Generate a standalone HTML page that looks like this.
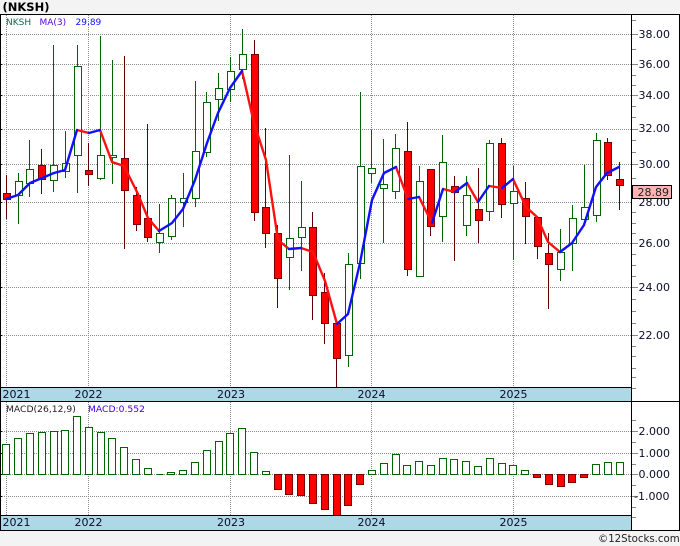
<!DOCTYPE html>
<html><head><meta charset="utf-8"><title>NKSH</title>
<style>
html,body{margin:0;padding:0;background:#f3f3f3}
svg{display:block}
text{font-family:"DejaVu Sans","Liberation Sans",sans-serif;font-size:11px;fill:#0c0c2a}
</style></head><body>
<svg width="680" height="546" viewBox="0 0 680 546" xmlns="http://www.w3.org/2000/svg">
<rect width="680" height="546" fill="#f3f3f3"/>
<rect x="0" y="14" width="680" height="517" fill="#fff"/>
<g shape-rendering="crispEdges">
<rect x="1" y="387" width="630" height="14" fill="#add8e6"/>
<rect x="1" y="515" width="630" height="15" fill="#add8e6"/>
<path fill="none" stroke="#8c8c8c" stroke-dasharray="1 1" d="M2 34.5H631M2 64.5H631M2 95.5H631M2 129.5H631M2 164.5H631M2 202.5H631M2 243.5H631M2 287.5H631M2 335.5H631M2 431.5H631M2 453.5H631M2 474.5H631M2 496.5H631M6.5 15V387M88.5 15V387M230.5 15V387M371.5 15V387M513.5 15V387M6.5 402V515M88.5 402V515M230.5 402V515M371.5 402V515M513.5 402V515"/>
<path fill="none" stroke="#888" d="M632 20.5h4M632 34.5h6M632 49.5h4M632 64.5h6M632 75.5h4M632 85.5h4M632 95.5h6M632 106.5h4M632 117.5h4M632 129.5h6M632 140.5h4M632 152.5h4M632 164.5h6M632 178.5h4M632 212.5h4M632 223.5h4M632 233.5h4M632 243.5h6M632 254.5h4M632 265.5h4M632 276.5h4M632 287.5h6M632 299.5h4M632 311.5h4M632 323.5h4M632 335.5h6M632 346.5h4M632 356.5h4M632 368.5h4M632 377.5h4M632 388.5h4M632 420.5h4M632 431.5h6M632 442.5h4M632 453.5h6M632 464.5h4M632 474.5h6M632 485.5h4M632 496.5h6M632 507.5h4M632 517.5h4"/>
<!-- green wicks -->
<path fill="none" stroke="#006400" d="M18.5 173V224M29.5 140V197M53.5 45V192M65.5 131V178M77.5 45V193M100.5 36V180M112.5 60V184M159.5 204V253M171.5 195V240M183.5 173V227M195.5 81V207M206.5 92V157M218.5 73V121M230.5 57V102M242.5 29V79M289.5 155V290M301.5 181V271M348.5 253V367M360.5 92V279M371.5 130V183M383.5 139V243M395.5 134V199M419.5 166V276M442.5 135V242M466.5 176V236M489.5 140V221M513.5 166V260M560.5 229V281M572.5 205V271M584.5 165V220M596.5 133V222"/>
<!-- red wicks -->
<path fill="none" stroke="#600000" d="M6.5 175V219M41.5 149V194M88.5 143V186M124.5 56V249M136.5 187V231M147.5 124V242M254.5 40V221M265.5 128V248M277.5 225V308M312.5 212V320M324.5 273V344M336.5 323V387M407.5 122V276M430.5 169V236M454.5 176V261M478.5 168V243M501.5 138V218M525.5 182V244M537.5 217V259M548.5 233V309M607.5 138V180M619.5 162V210"/>
<!-- green boxes -->
<path fill="#fff" stroke="#006400" d="M15.5 181.5h7V195.5h-7zM26.5 169.5h7V183.5h-7zM50.5 165.5h7V180.5h-7zM62.5 163.5h7V171.5h-7zM74.5 66.5h7V155.5h-7zM97.5 155.5h7V178.5h-7zM109.5 155.5h7V157.5h-7zM156.5 233.5h7V242.5h-7zM168.5 198.5h7V236.5h-7zM180.5 198.5h7V202.5h-7zM192.5 151.5h7V198.5h-7zM203.5 102.5h7V152.5h-7zM215.5 88.5h7V99.5h-7zM227.5 71.5h7V89.5h-7zM239.5 54.5h7V69.5h-7zM286.5 238.5h7V257.5h-7zM298.5 227.5h7V237.5h-7zM345.5 264.5h7V355.5h-7zM357.5 166.5h7V263.5h-7zM368.5 168.5h7V173.5h-7zM380.5 184.5h7V188.5h-7zM392.5 148.5h7V191.5h-7zM416.5 181.5h7V276.5h-7zM439.5 162.5h7V216.5h-7zM463.5 195.5h7V225.5h-7zM486.5 143.5h7V211.5h-7zM510.5 191.5h7V203.5h-7zM557.5 252.5h7V269.5h-7zM569.5 218.5h7V243.5h-7zM581.5 207.5h7V219.5h-7zM593.5 140.5h7V215.5h-7z"/>
<!-- red boxes -->
<path fill="#ff0000" stroke="#7a0000" d="M3.5 193.5h7V199.5h-7zM38.5 165.5h7V179.5h-7zM85.5 170.5h7V174.5h-7zM121.5 158.5h7V190.5h-7zM133.5 195.5h7V224.5h-7zM144.5 218.5h7V237.5h-7zM251.5 54.5h7V212.5h-7zM262.5 207.5h7V233.5h-7zM274.5 233.5h7V278.5h-7zM309.5 227.5h7V295.5h-7zM321.5 292.5h7V323.5h-7zM333.5 323.5h7V358.5h-7zM404.5 151.5h7V269.5h-7zM427.5 169.5h7V226.5h-7zM451.5 186.5h7V192.5h-7zM475.5 209.5h7V220.5h-7zM498.5 143.5h7V204.5h-7zM522.5 198.5h7V216.5h-7zM534.5 217.5h7V246.5h-7zM545.5 253.5h7V264.5h-7zM604.5 142.5h7V175.5h-7zM616.5 179.5h7V185.5h-7z"/>
<!-- MACD green -->
<path fill="#fff" stroke="#006400" d="M2.5 444.5h7V474.5h-7zM14.5 438.5h7V474.5h-7zM26.5 433.5h7V474.5h-7zM38.5 432.5h7V474.5h-7zM50.5 431.5h7V474.5h-7zM61.5 430.5h7V474.5h-7zM73.5 416.5h7V474.5h-7zM85.5 427.5h7V474.5h-7zM97.5 432.5h7V474.5h-7zM108.5 438.5h7V474.5h-7zM120.5 447.5h7V474.5h-7zM132.5 459.5h7V474.5h-7zM144.5 468.5h7V474.5h-7zM156.5 474.5h7V474.5h-7zM167.5 472.5h7V474.5h-7zM179.5 470.5h7V474.5h-7zM191.5 462.5h7V474.5h-7zM203.5 450.5h7V474.5h-7zM215.5 441.5h7V474.5h-7zM226.5 433.5h7V474.5h-7zM238.5 428.5h7V474.5h-7zM250.5 452.5h7V474.5h-7zM262.5 471.5h7V474.5h-7zM368.5 470.5h7V474.5h-7zM380.5 463.5h7V474.5h-7zM392.5 454.5h7V474.5h-7zM403.5 465.5h7V474.5h-7zM415.5 461.5h7V474.5h-7zM427.5 465.5h7V474.5h-7zM439.5 458.5h7V474.5h-7zM450.5 459.5h7V474.5h-7zM462.5 461.5h7V474.5h-7zM474.5 466.5h7V474.5h-7zM486.5 458.5h7V474.5h-7zM498.5 463.5h7V474.5h-7zM509.5 465.5h7V474.5h-7zM521.5 470.5h7V474.5h-7zM592.5 464.5h7V474.5h-7zM604.5 462.5h7V474.5h-7zM616.5 462.5h7V474.5h-7z"/>
<!-- MACD red -->
<path fill="#ff0000" stroke="#7a0000" d="M274.5 474.5h7V489.5h-7zM285.5 474.5h7V494.5h-7zM297.5 474.5h7V495.5h-7zM309.5 474.5h7V503.5h-7zM321.5 474.5h7V509.5h-7zM333.5 474.5h7V515.5h-7zM344.5 474.5h7V505.5h-7zM356.5 474.5h7V484.5h-7zM533.5 474.5h7V477.5h-7zM545.5 474.5h7V484.5h-7zM557.5 474.5h7V486.5h-7zM568.5 474.5h7V482.5h-7zM580.5 474.5h7V477.5h-7z"/>
<!-- frame -->
<path fill="none" stroke="#000" d="M0 14.5H680M0 387.5H631M0 401.5H680M0 515.5H631M0 530.5H680M.5 14V531M679.5 14V531M631.5 14V531"/>
<path fill="none" stroke="#000" d="M0 34.5h2M0 64.5h2M0 95.5h2M0 129.5h2M0 164.5h2M0 202.5h2M0 243.5h2M0 287.5h2M0 335.5h2M0 431.5h2M0 453.5h2M0 474.5h2M0 496.5h2"/>
</g>
<!-- moving average -->
<g fill="none" stroke-width="2.4" stroke-linejoin="round" stroke-linecap="round">
<path stroke="#ff1010" d="M77 130L89 133M100 130L112 162L124 166L137 192L148 218L159 231M242 71L254 123L266 160L278 240L289 249M301 248L313 252L325 281L337 324M396 167L408 199M419 197L432 223M443 189L455 192M467 183L478 202M489 186L502 188M513 179L526 207L537 217L548 242L560 252"/>
<path stroke="#1010ff" d="M6 199L18 195L30 183L42 178L54 173L65 170L77 130M89 133L100 130M159 231L172 223L183 209L195 180L207 143L218 113L230 88L242 71M289 249L301 248M337 324L348 314L360 263L372 200L384 173L396 167M408 199L419 197M432 223L443 189M455 192L467 183M478 202L489 186M502 188L513 179M560 252L572 243L584 225L596 187L607 173L619 167"/>
</g>
<text x="2.5" y="11" style="font-weight:bold;font-size:11.5px;fill:#000">(NKSH)</text>
<text x="6" y="25" style="font-size:9px;fill:#0a6a4a">NKSH</text>
<text x="39.5" y="25" style="font-size:9px;fill:#5500dd">MA(3)</text>
<text x="75.5" y="25" style="font-size:9px;fill:#1010ff">29.89</text>
<text x="6" y="412" style="font-size:9.2px;fill:#222">MACD(26,12,9)</text>
<text x="88" y="412" style="font-size:9.2px;fill:#4400ee">MACD:0.552</text>
<text x="2.5" y="398">2021</text><text x="74.5" y="398">2022</text><text x="217" y="398">2023</text><text x="357.5" y="398">2024</text><text x="499.5" y="398">2025</text>
<text x="2.5" y="526">2021</text><text x="74.5" y="526">2022</text><text x="217" y="526">2023</text><text x="357.5" y="526">2024</text><text x="499.5" y="526">2025</text>
<text x="638.5" y="38">38.00</text><text x="638.5" y="68">36.00</text><text x="638.5" y="99">34.00</text><text x="638.5" y="132">32.00</text><text x="638.5" y="168">30.00</text><text x="638.5" y="206">28.00</text><text x="638.5" y="247">26.00</text><text x="638.5" y="291">24.00</text><text x="638.5" y="339">22.00</text>
<text x="638.5" y="435">2.000</text><text x="638.5" y="457">1.000</text><text x="638.5" y="478">0.000</text><text x="634" y="500">-1.000</text>
<rect x="632.5" y="185.5" width="39" height="13" fill="#ffb3b3" stroke="#000" shape-rendering="crispEdges"/>
<text x="637.5" y="196" style="fill:#222">28.89</text>
<text x="598" y="542" style="font-size:10.2px;fill:#222">©12Stocks.com</text>
</svg>
</body></html>
